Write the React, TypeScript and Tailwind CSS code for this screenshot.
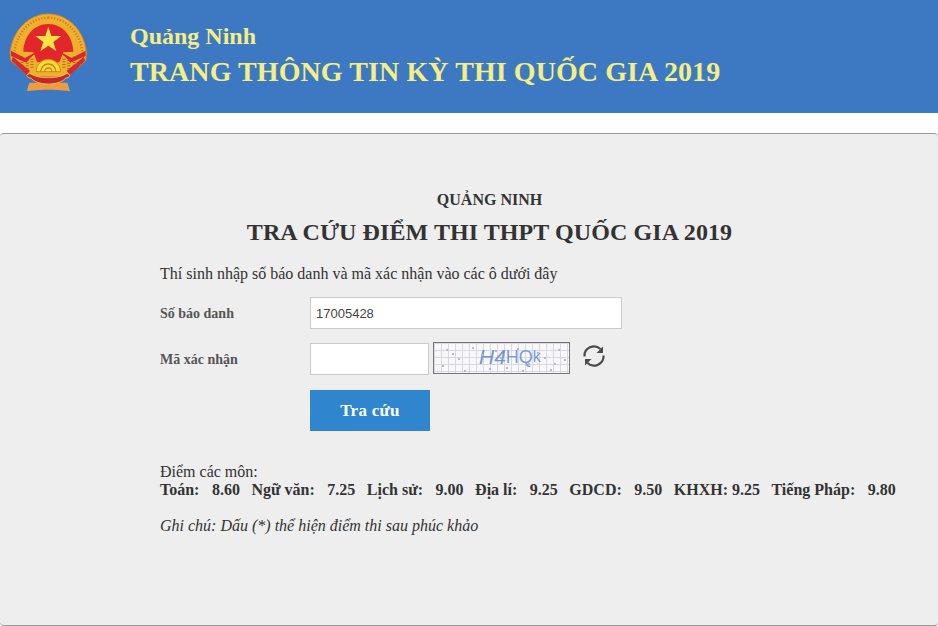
const scores = [
  { label: 'Toán:', value: '8.60' },
  { label: 'Ngữ văn:', value: '7.25' },
  { label: 'Lịch sử:', value: '9.00' },
  { label: 'Địa lí:', value: '9.25' },
  { label: 'GDCD:', value: '9.50' },
  { label: 'KHXH:', value: '9.25', tight: true },
  { label: 'Tiếng Pháp:', value: '9.80' },
];

const noise = [
  [12, 6], [24, 15], [38, 4], [47, 11], [61, 7], [72, 24], [83, 5], [94, 20], [103, 9], [116, 26],
  [124, 6], [130, 16], [8, 22], [30, 27], [55, 25], [66, 14], [88, 27], [110, 14], [18, 10], [120, 20],
];

// drawn in the coordinates of a 3x crop of the header, hence the viewBox offset
const Emblem = () => (
  <svg width="78" height="80" viewBox="27 39 234 240">
    <path d="M145 42C85 42 35 95 31 160l2 22 42 36 10 12h120l10-12 42-36 2-22C255 95 205 42 145 42z" fill="#f0b02e" stroke="#e08a22" strokeWidth="3" />
    <path d="M145 53C92 53 47 100 43 160" fill="none" stroke="#c8741a" strokeWidth="7" strokeDasharray="3 6" />
    <path d="M145 53C198 53 243 100 247 160" fill="none" stroke="#c8741a" strokeWidth="7" strokeDasharray="3 6" />
    <path d="M145 72C105 72 72 105 70 155l30 2 12 30h66l12-30 30-2c-2-50-35-83-75-83z" fill="#e2262b" />
    <path d="M145 80l9 28h30l-24 18 9 28-24-17-24 17 9-28-24-18h30z" fill="#f8e442" />
    <path d="M58 160l2 44 30 12 22-5-12-44z" fill="#eeb02f" />
    <path d="M232 160l-2 44-30 12-22-5 12-44z" fill="#eeb02f" />
    <path d="M66 170v38M82 172v38M96 176v32M222 170v38M206 172v38M192 176v32" fill="none" stroke="#b9691a" strokeWidth="9" strokeDasharray="3 5" />
    <path d="M108 215a37 37 0 0 1 74 0z" fill="#f7dc34" stroke="#d08c1c" strokeWidth="3" />
    <path d="M122 215a23 23 0 0 1 46 0M134 215a11 11 0 0 1 22 0" fill="none" stroke="#c9831b" strokeWidth="4" />
    <path d="M33 152l42 22 40-22-28 26-8 10-46-20z" fill="#d9282b" />
    <path d="M257 152l-42 22-40-22 28 26 8 10 46-20z" fill="#d9282b" />
    <path d="M35 182l45 44 10-14-52-42z" fill="#d9282b" />
    <path d="M255 182l-45 44-10-14 52-42z" fill="#d9282b" />
    <path d="M88 248l-8 25 50-4h30l50 4-8-25z" fill="#ee9c3f" />
    <path d="M80 226c4-6 12-6 16-2 14 7 30 9 49 9s35-2 49-9c4-4 12-4 16 2-2 6-8 8-13 8-6 10-28 18-52 18s-46-8-52-18c-5 0-11-2-13-8z" fill="#c9242a" stroke="#f2cf55" strokeWidth="2.500" />
  </svg>
);

const Captcha = () => (
  <div className="relative flex h-[32px] w-[137px] items-center overflow-hidden border border-[#777] bg-[#f8f8fa] bg-[linear-gradient(#d8d8de_1px,transparent_1px),linear-gradient(90deg,#d8d8de_1px,transparent_1px)] bg-[size:7px_7px] pb-[3px] pl-[45px] font-['Liberation_Sans',sans-serif] leading-none text-[#7a9cd6]">
    <span className="text-[21px] text-[#7094d2] italic">H4</span>
    <span className="text-[18px]">HQ</span>
    <span className="text-[16px]">k</span>
    <svg width="135" height="30" className="absolute top-0 left-0">
      {noise.map(([x, y]) => (
        <rect key={`${x}-${y}`} x={x} y={y} width="2" height="2" fill="#b4bad2" />
      ))}
    </svg>
  </div>
);

const RefreshIcon = () => (
  <svg width="24" height="24" viewBox="0 0 24 24" fill="none" stroke="#4a4a4a" strokeWidth="2.200" className="-mt-[6px] ml-[12px]">
    <path d="M2.500 12.500A9.500 9.500 0 0 1 18.500 5" />
    <path d="M21.500 11.500A9.500 9.500 0 0 1 5.500 19" />
    <path d="M21 2.500v6.500h-6.500z" fill="#4a4a4a" stroke="none" />
    <path d="M3 21.500V15h6.500z" fill="#4a4a4a" stroke="none" />
  </svg>
);

export default function App() {
  return (
    <div className="min-h-[626px] overflow-hidden bg-white font-['Liberation_Serif',serif] text-[#333]">
      <header className="flex h-[113px] bg-[#3c79c2]">
        <div className="pt-[13px] pl-[9px]">
          <Emblem />
        </div>
        <div className="pt-[21px] pl-[43px] font-bold text-[#f5ee84]">
          <div className="text-[24px] leading-[30px]">Quảng Ninh</div>
          <div className="mt-[3px] text-[28px] leading-[36px] tracking-[0.08px]">TRANG THÔNG TIN KỲ THI QUỐC GIA 2019</div>
        </div>
      </header>

      <main className="mt-[20px] h-[493px] rounded-[4px] border-t border-b border-[#999] bg-[#eeeeee] pt-[57px] pl-[160px]">
        <div className="-ml-[1px] w-[661px] text-center font-bold">
          <h2 className="text-[16px] leading-[18px]">QUẢNG NINH</h2>
          <h1 className="mt-[9px] text-[24px] leading-[28px] tracking-[0.08px]">TRA CỨU ĐIỂM THI THPT QUỐC GIA 2019</h1>
        </div>
        <p className="mt-[19px] text-[16px] leading-[18px]">Thí sinh nhập số báo danh và mã xác nhận vào các ô dưới đây</p>

        <div className="mt-[14px] flex items-center">
          <label className="w-[150px] text-[14px] font-bold text-[#555]">Số báo danh</label>
          <input readOnly value="17005428" className="h-[32px] w-[312px] border border-[#ccc] bg-white px-[5px] font-['Liberation_Sans',sans-serif] text-[13px] text-[#444]" />
        </div>

        <div className="mt-[14px] flex items-center">
          <label className="w-[150px] text-[14px] font-bold text-[#555]">Mã xác nhận</label>
          <input readOnly className="h-[32px] w-[119px] border border-[#ccc] bg-white" />
          <div className="-mt-[2px] ml-[4px]">
            <Captcha />
          </div>
          <RefreshIcon />
        </div>

        <button className="mt-[15px] ml-[150px] block h-[41px] w-[120px] bg-[#2f86ce] text-[17px] font-bold tracking-[0.3px] text-white">Tra cứu</button>

        <p className="mt-[32px] text-[16px] leading-[18px]">Điểm các môn:</p>
        <div className="flex text-[16px] leading-[18px] font-bold whitespace-pre">
          {scores.map(s => (
            <span key={s.label} className="mr-[11.5px]">
              {s.label}
              <span className={s.tight ? 'ml-[4px]' : 'ml-[12.5px]'}>{s.value}</span>
            </span>
          ))}
        </div>
        <p className="mt-[18px] text-[16px] leading-[18px] italic">Ghi chú: Dấu (*) thể hiện điểm thi sau phúc khảo</p>
      </main>
    </div>
  );
}
